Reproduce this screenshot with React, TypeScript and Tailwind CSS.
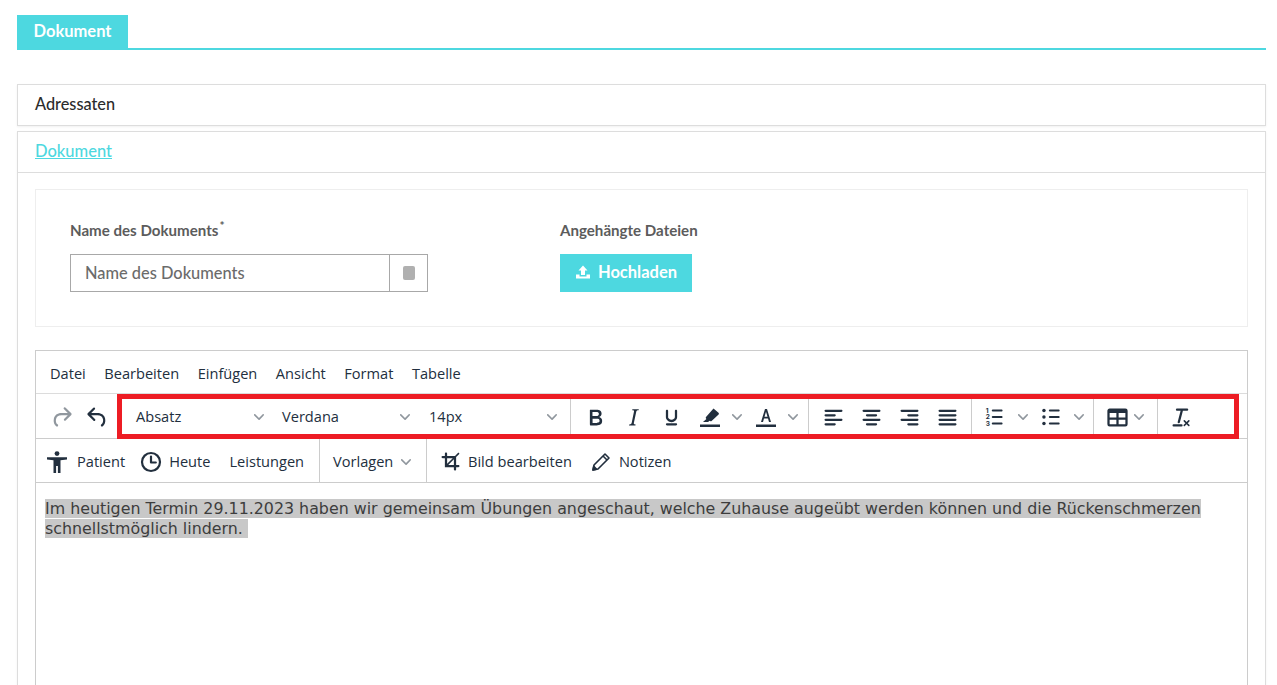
const ICON = "#222f3e"

function Icon({ d, className = "w-[27px] h-[27px] -m-[1.5px] shrink-0", fill = ICON }: { d: string; className?: string; fill?: string }) {
  return (
    <svg viewBox="0 0 24 24" className={className} fill={fill}>
      <path d={d} />
    </svg>
  )
}

function Chevron({ className = "" }: { className?: string }) {
  return (
    <svg viewBox="0 0 10 10" className={`w-[10px] h-[10px] shrink-0 ${className}`} fill="#222f3e" fillOpacity="0.5">
      <path d="M8.7 2.2c.3-.3.8-.3 1 0 .4.4.4.9 0 1.2L5.7 7.8c-.3.3-.9.3-1.2 0L.2 3.4a.8.8 0 0 1 0-1.2c.3-.3.8-.3 1.1 0L5 6l3.7-3.8z" />
    </svg>
  )
}

const paths = {
  undo: "M6.4 8H12c3.7 0 6.2 2 6.8 5.1.6 2.7-.4 5.6-2.3 6.8a1 1 0 0 1-1-1.8c1.1-.7 1.8-2.7 1.4-4.6-.5-2.1-2.1-3.5-4.9-3.5H6.4l3.3 3.3a1 1 0 1 1-1.4 1.4l-5-5a1 1 0 0 1 0-1.4l5-5a1 1 0 0 1 1.4 1.4L6.4 8z",
  redo: "M17.6 10H12c-2.8 0-4.4 1.4-4.9 3.5-.4 2 .3 4 1.4 4.6a1 1 0 1 1-1 1.8c-2-1.2-2.9-4.1-2.3-6.8.6-3 3-5.1 6.8-5.1h5.6l-3.3-3.3a1 1 0 1 1 1.4-1.4l5 5a1 1 0 0 1 0 1.4l-5 5a1 1 0 0 1-1.4-1.4l3.3-3.3z",
  bold: "M7.8 19c-.3 0-.5 0-.6-.2l-.2-.5V5.7c0-.2 0-.4.2-.5l.6-.2h5c1.5 0 2.7.3 3.5 1 .7.6 1.1 1.4 1.1 2.5a3 3 0 0 1-.6 1.9c-.4.6-1 1-1.6 1.2.4.1.9.3 1.3.6s.8.7 1 1.2c.3.4.4 1 .4 1.6 0 1.3-.4 2.3-1.3 3-.8.7-2.1 1-3.8 1H7.8zm5-8.3c.6 0 1.2-.1 1.6-.5.4-.3.6-.7.6-1.3 0-1.1-.8-1.7-2.3-1.7H9.3v3.5h3.4zm.5 6c.7 0 1.3-.1 1.7-.4.4-.4.6-.9.6-1.5s-.2-1-.7-1.4c-.4-.3-1-.4-2-.4H9.4v3.8h4z",
  italic: "M16.7 4.7l-.1.9h-.3c-.6 0-1 0-1.4.3-.3.3-.4.6-.5 1.1l-2.1 9.8v.6c0 .5.4.8 1.4.8h.2l-.2.8H8l.2-.8h.2c1.1 0 1.8-.5 2-1.5l2-9.8.1-.5c0-.6-.4-.8-1.4-.8h-.3l.2-.9h5.8z",
  underline: "M16 5c.6 0 1 .4 1 1v5.5a4 4 0 0 1-.4 1.8l-1 1.4a5.3 5.3 0 0 1-5.5 1 5 5 0 0 1-1.6-1c-.5-.4-.8-.9-1.1-1.4a4 4 0 0 1-.4-1.8V6c0-.6.4-1 1-1s1 .4 1 1v5.5c0 .3 0 .6.2 1l.6.7a3.3 3.3 0 0 0 2.2.8 3.4 3.4 0 0 0 2.2-.8c.3-.2.4-.5.6-.8l.2-.9V6c0-.6.4-1 1-1zM8 17h8c.6 0 1 .4 1 1s-.4 1-1 1H8a1 1 0 0 1 0-2z",
  highlight: "M15.5 3.5l5 4.2c.5.5.6 1.2.1 1.7l-7 6.6c-.4.4-1 .4-1.5.1l-.6-.4-1.4 1.3H5l3.4-3.1-.4-.5c-.4-.5-.4-1.1 0-1.5l7.5-8.4zM2 19.5h20V22H2z",
  left: "M5 5h14c.6 0 1 .4 1 1s-.4 1-1 1H5a1 1 0 1 1 0-2zm0 4h8c.6 0 1 .4 1 1s-.4 1-1 1H5a1 1 0 1 1 0-2zm0 8h8c.6 0 1 .4 1 1s-.4 1-1 1H5a1 1 0 0 1 0-2zm0-4h14c.6 0 1 .4 1 1s-.4 1-1 1H5a1 1 0 0 1 0-2z",
  center: "M5 5h14c.6 0 1 .4 1 1s-.4 1-1 1H5a1 1 0 1 1 0-2zm3 4h8c.6 0 1 .4 1 1s-.4 1-1 1H8a1 1 0 1 1 0-2zm0 8h8c.6 0 1 .4 1 1s-.4 1-1 1H8a1 1 0 0 1 0-2zm-3-4h14c.6 0 1 .4 1 1s-.4 1-1 1H5a1 1 0 0 1 0-2z",
  right: "M5 5h14c.6 0 1 .4 1 1s-.4 1-1 1H5a1 1 0 1 1 0-2zm6 4h8c.6 0 1 .4 1 1s-.4 1-1 1h-8a1 1 0 0 1 0-2zm0 8h8c.6 0 1 .4 1 1s-.4 1-1 1h-8a1 1 0 0 1 0-2zm-6-4h14c.6 0 1 .4 1 1s-.4 1-1 1H5a1 1 0 0 1 0-2z",
  justify: "M5 5h14c.6 0 1 .4 1 1s-.4 1-1 1H5a1 1 0 1 1 0-2zm0 4h14c.6 0 1 .4 1 1s-.4 1-1 1H5a1 1 0 1 1 0-2zm0 4h14c.6 0 1 .4 1 1s-.4 1-1 1H5a1 1 0 0 1 0-2zm0 4h14c.6 0 1 .4 1 1s-.4 1-1 1H5a1 1 0 0 1 0-2z",
  table: "M19 4a2 2 0 0 1 2 2v12a2 2 0 0 1-2 2H5a2 2 0 0 1-2-2V6c0-1.1.9-2 2-2h14zM5 14v4h6v-4H5zm14 0h-6v4h6v-4zm0-6h-6v4h6V8zM5 12h6V8H5v4z",
  clear: "M13.2 6a1 1 0 0 1 0 .2l-2.6 10a1 1 0 0 1-1 .8h-.2a.8.8 0 0 1-.8-1l2.6-10H8a1 1 0 1 1 0-2h9a1 1 0 0 1 0 2h-3.8zM5 18h7a1 1 0 0 1 0 2H5a1 1 0 0 1 0-2zm13 1.5L16.5 18 15 19.5a.7.7 0 0 1-1-1l1.5-1.5-1.5-1.5a.7.7 0 0 1 1-1l1.5 1.5 1.5-1.5a.7.7 0 0 1 1 1L17.5 17l1.5 1.5a.7.7 0 0 1-1 1z",
  crop: "M17 8v7h2c.6 0 1 .4 1 1s-.4 1-1 1h-2v2c0 .6-.4 1-1 1a1 1 0 0 1-1-1v-2H7V9H5a1 1 0 1 1 0-2h2V5c0-.6.4-1 1-1s1 .4 1 1v2h7l3-3 1 1-3 3zM9 9v5l5-5H9zm1 6h5v-5l-5 5z",
}

function Btn({ d }: { d: string }) {
  return (
    <div className="w-[38px] h-[34px] flex items-center justify-center shrink-0">
      <Icon d={d} />
    </div>
  )
}

function Select({ label, className }: { label: string; className: string }) {
  return (
    <div className={`flex items-center justify-between shrink-0 ${className}`}>
      <span>{label}</span>
      <Chevron />
    </div>
  )
}

function Sep() {
  return <div className="w-px self-stretch bg-[#cccccc] shrink-0" />
}

function TextColorIcon() {
  return (
    <svg viewBox="0 0 24 24" className="w-6 h-6" fill={ICON}>
      <path d="M2 19.5h20V22H2z" />
      <path fillRule="evenodd" d="M11 4h2l4 13h-2l-1-3.4h-4L9 17H7l4-13zm1 2.8l-1.5 5h3L12 6.8z" />
    </svg>
  )
}

function NumList() {
  return (
    <svg viewBox="0 0 24 24" className="w-[26px] h-[26px] -m-px shrink-0" fill={ICON}>
      <path d="M10 17h8c.6 0 1 .4 1 1s-.4 1-1 1h-8a1 1 0 0 1 0-2zm0-6h8c.6 0 1 .4 1 1s-.4 1-1 1h-8a1 1 0 0 1 0-2zm0-6h8c.6 0 1 .4 1 1s-.4 1-1 1h-8a1 1 0 1 1 0-2z" />
      <text x="3.4" y="8" fontSize="6" fontWeight="700" fontFamily="Inter, sans-serif">1</text>
      <text x="3.4" y="14" fontSize="6" fontWeight="700" fontFamily="Inter, sans-serif">2</text>
      <text x="3.4" y="20" fontSize="6" fontWeight="700" fontFamily="Inter, sans-serif">3</text>
    </svg>
  )
}

function BulList() {
  return (
    <svg viewBox="0 0 24 24" className="w-[26px] h-[26px] -m-px shrink-0" fill={ICON}>
      <path d="M11 5h8c.6 0 1 .4 1 1s-.4 1-1 1h-8a1 1 0 0 1 0-2zm0 6h8c.6 0 1 .4 1 1s-.4 1-1 1h-8a1 1 0 0 1 0-2zm0 6h8c.6 0 1 .4 1 1s-.4 1-1 1h-8a1 1 0 0 1 0-2z" />
      <circle cx="5.5" cy="6" r="1.6" />
      <circle cx="5.5" cy="12" r="1.6" />
      <circle cx="5.5" cy="18" r="1.6" />
    </svg>
  )
}

function PersonIcon() {
  return (
    <svg viewBox="0 0 24 24" className="w-6 h-6" fill={ICON}>
      <circle cx="12" cy="3.6" r="2.4" />
      <path d="M2 7.2h20v2.4l-6.5.6V23h-2.6v-7h-1.8v7H8.500V10.200L2 9.600z" />
    </svg>
  )
}

function ClockIcon() {
  return (
    <svg viewBox="0 0 24 24" className="w-6 h-6" fill="none" stroke={ICON} strokeWidth="2.2" strokeLinecap="round" strokeLinejoin="round">
      <circle cx="12" cy="12" r="9" />
      <path d="M12 6.5V12.5h4.8" />
    </svg>
  )
}

function PencilIcon() {
  return (
    <svg viewBox="0 0 24 24" className="w-6 h-6" fill="none" stroke={ICON} strokeWidth="1.6" strokeLinejoin="round">
      <path d="M4 20l1-5L16 4l4 4L9 19z" />
      <path d="M14 6l4 4" />
      <path d="M4 20l.8-3.6 2.8 2.8z" fill={ICON} />
    </svg>
  )
}

function UploadIcon() {
  return (
    <svg viewBox="0 0 16 16" className="w-4 h-4" fill="#ffffff">
      <path d="M8 1.5L12.5 6.5H10V11H6V6.5H3.5z" />
      <path d="M1 10.5h3.5V12.5h7v-2H15V14.5H1z" />
    </svg>
  )
}

export default function App() {
  return (
    <div className="h-[685px] overflow-hidden bg-white pl-[17px] pr-[11px] pt-[15px] font-['Lato',sans-serif]">
      <div className="border-b-2 border-[#4dd8e0] h-[35px]">
        <div className="w-[111px] h-[35px] bg-[#4dd8e0] text-white font-bold text-[16.5px] flex items-center justify-center pb-[3px]">
          Dokument
        </div>
      </div>

      <div className="mt-[34px] h-[42px] border border-[#dddddd] shadow-[0_1px_2px_rgba(0,0,0,0.06)] flex items-center pl-[17px] pb-[2px] text-[16.3px] font-medium text-[#2b2b2b]">
        Adressaten
      </div>

      <div className="mt-[5px] border border-[#dddddd] h-[600px] shadow-[0_1px_2px_rgba(0,0,0,0.06)]">
        <div className="h-[41px] border-b border-[#dddddd] flex items-center pl-[17px] pb-[2px]">
          <span className="text-[#4dd8e0] text-[16.5px] underline font-medium">Dokument</span>
        </div>

        <div className="px-[17px] pt-[16px]">
          <div className="h-[138px] border border-[#eeeeee] flex pl-[34px] pt-[32px] text-[#5c5c5c]">
            <div className="w-[490px]">
              <div className="text-[15.1px] font-bold h-[20px] leading-[16px]">
                Name des Dokuments<sup className="text-[12px] ml-px">*</sup>
              </div>
              <div className="mt-[12px] w-[358px] h-[38px] border border-[#a8a8a8] flex">
                <div className="flex-1 flex items-center pl-[14px] text-[16.4px] text-[#6b6b6b] font-medium">Name des Dokuments</div>
                <div className="w-[38px] border-l border-[#a8a8a8] flex items-center justify-center">
                  <div className="w-[12px] h-[14px] rounded-[2px] bg-[#b0b0b0]" />
                </div>
              </div>
            </div>
            <div>
              <div className="text-[15.1px] font-bold h-[20px] leading-[16px]">Angehängte Dateien</div>
              <div className="mt-[12px] w-[132px] h-[38px] bg-[#4dd8e0] text-white font-bold text-[16.5px] flex items-center justify-center gap-[7px] pb-[2px]">
                <UploadIcon />
                Hochladen
              </div>
            </div>
          </div>

          <div className="mt-[23px] h-[400px] border border-[#cccccc] font-['Open_Sans',sans-serif] text-[14.6px] text-[#222f3e]">
            <div className="h-[43px] border-b border-[#dcdcdc] flex items-center pt-[3px] pl-[14px] gap-[18.5px]">
              <span>Datei</span>
              <span>Bearbeiten</span>
              <span>Einfügen</span>
              <span>Ansicht</span>
              <span>Format</span>
              <span>Tabelle</span>
            </div>

            <div className="relative h-[45px] border-b border-[#cccccc] flex items-stretch">
              <div className="w-[83px] flex items-center pl-[7px] pt-[2px] shrink-0">
                <div className="w-[36px] flex justify-center"><Icon d={paths.redo} fill="#222f3e80" /></div>
                <div className="w-[36px] flex justify-center"><Icon d={paths.undo} /></div>
              </div>
              <div className="w-[8px] shrink-0" />
              <div className="flex items-center pt-[2px] shrink-0">
                <Select label="Absatz" className="w-[147px] pl-[9px] pr-[10px]" />
                <Select label="Verdana" className="w-[147px] pl-[8px] pr-[11px]" />
                <Select label="14px" className="w-[149px] pl-[8px] pr-[13px]" />
              </div>
              <Sep />
              <div className="flex items-center pl-[5px] pt-[2px] shrink-0">
                <Btn d={paths.bold} />
                <Btn d={paths.italic} />
                <Btn d={paths.underline} />
                <div className="w-[40px] flex justify-center"><Icon d={paths.highlight} className="w-6 h-6" /></div>
                <Chevron className="mr-[11px] ml-[2px]" />
                <div className="w-[26px] flex justify-center"><TextColorIcon /></div>
                <Chevron className="ml-[9px] mr-[10px]" />
              </div>
              <Sep />
              <div className="flex items-center pl-[5px] pr-[5px] pt-[2px] shrink-0">
                <Btn d={paths.left} />
                <Btn d={paths.center} />
                <Btn d={paths.right} />
                <Btn d={paths.justify} />
              </div>
              <Sep />
              <div className="flex items-center pl-[11px] pt-[2px] shrink-0">
                <NumList />
                <Chevron className="ml-[11px] mr-[11px]" />
                <BulList />
                <Chevron className="ml-[11px] mr-[9px]" />
              </div>
              <Sep />
              <div className="flex items-center pl-[11px] pt-[2px] shrink-0">
                <Icon d={paths.table} />
                <Chevron className="ml-[5px] mr-[13px]" />
              </div>
              <Sep />
              <div className="flex items-center pl-[11px] pt-[2px] shrink-0">
                <Icon d={paths.clear} />
              </div>
              <div className="absolute left-[81px] right-[8px] top-0 -bottom-px border-[5px] border-[#ed1c24] pointer-events-none" />
            </div>

            <div className="h-[44px] border-b border-[#cccccc] flex items-stretch">
              <div className="flex items-center pl-[9px] pt-[2px] w-[283px] shrink-0">
                <PersonIcon />
                <span className="ml-[8px]">Patient</span>
                <span className="ml-[14px]"><ClockIcon /></span>
                <span className="ml-[6px]">Heute</span>
                <span className="ml-[19px]">Leistungen</span>
              </div>
              <Sep />
              <div className="flex items-center pl-[13px] pt-[2px] w-[106px] shrink-0">
                <span>Vorlagen</span>
                <Chevron className="ml-[8px]" />
              </div>
              <Sep />
              <div className="flex items-center pl-[11px] pt-[2px]">
                <Icon d={paths.crop} />
                <span className="ml-[6px]">Bild bearbeiten</span>
                <span className="ml-[17px]"><PencilIcon /></span>
                <span className="ml-[6px]">Notizen</span>
              </div>
            </div>

            <div className="pl-[9px] pr-[9px] pt-[16px] font-['DejaVu_Sans',sans-serif] text-[15.85px] leading-[20px] text-[#3d3d3d]">
              <span className="bg-[#c8c8c8]">
                Im heutigen Termin 29.11.2023 haben wir gemeinsam Übungen angeschaut, welche Zuhause augeübt werden können und die Rückenschmerzen schnellstmöglich lindern.&nbsp;
              </span>
            </div>
          </div>
        </div>
      </div>
    </div>
  )
}
